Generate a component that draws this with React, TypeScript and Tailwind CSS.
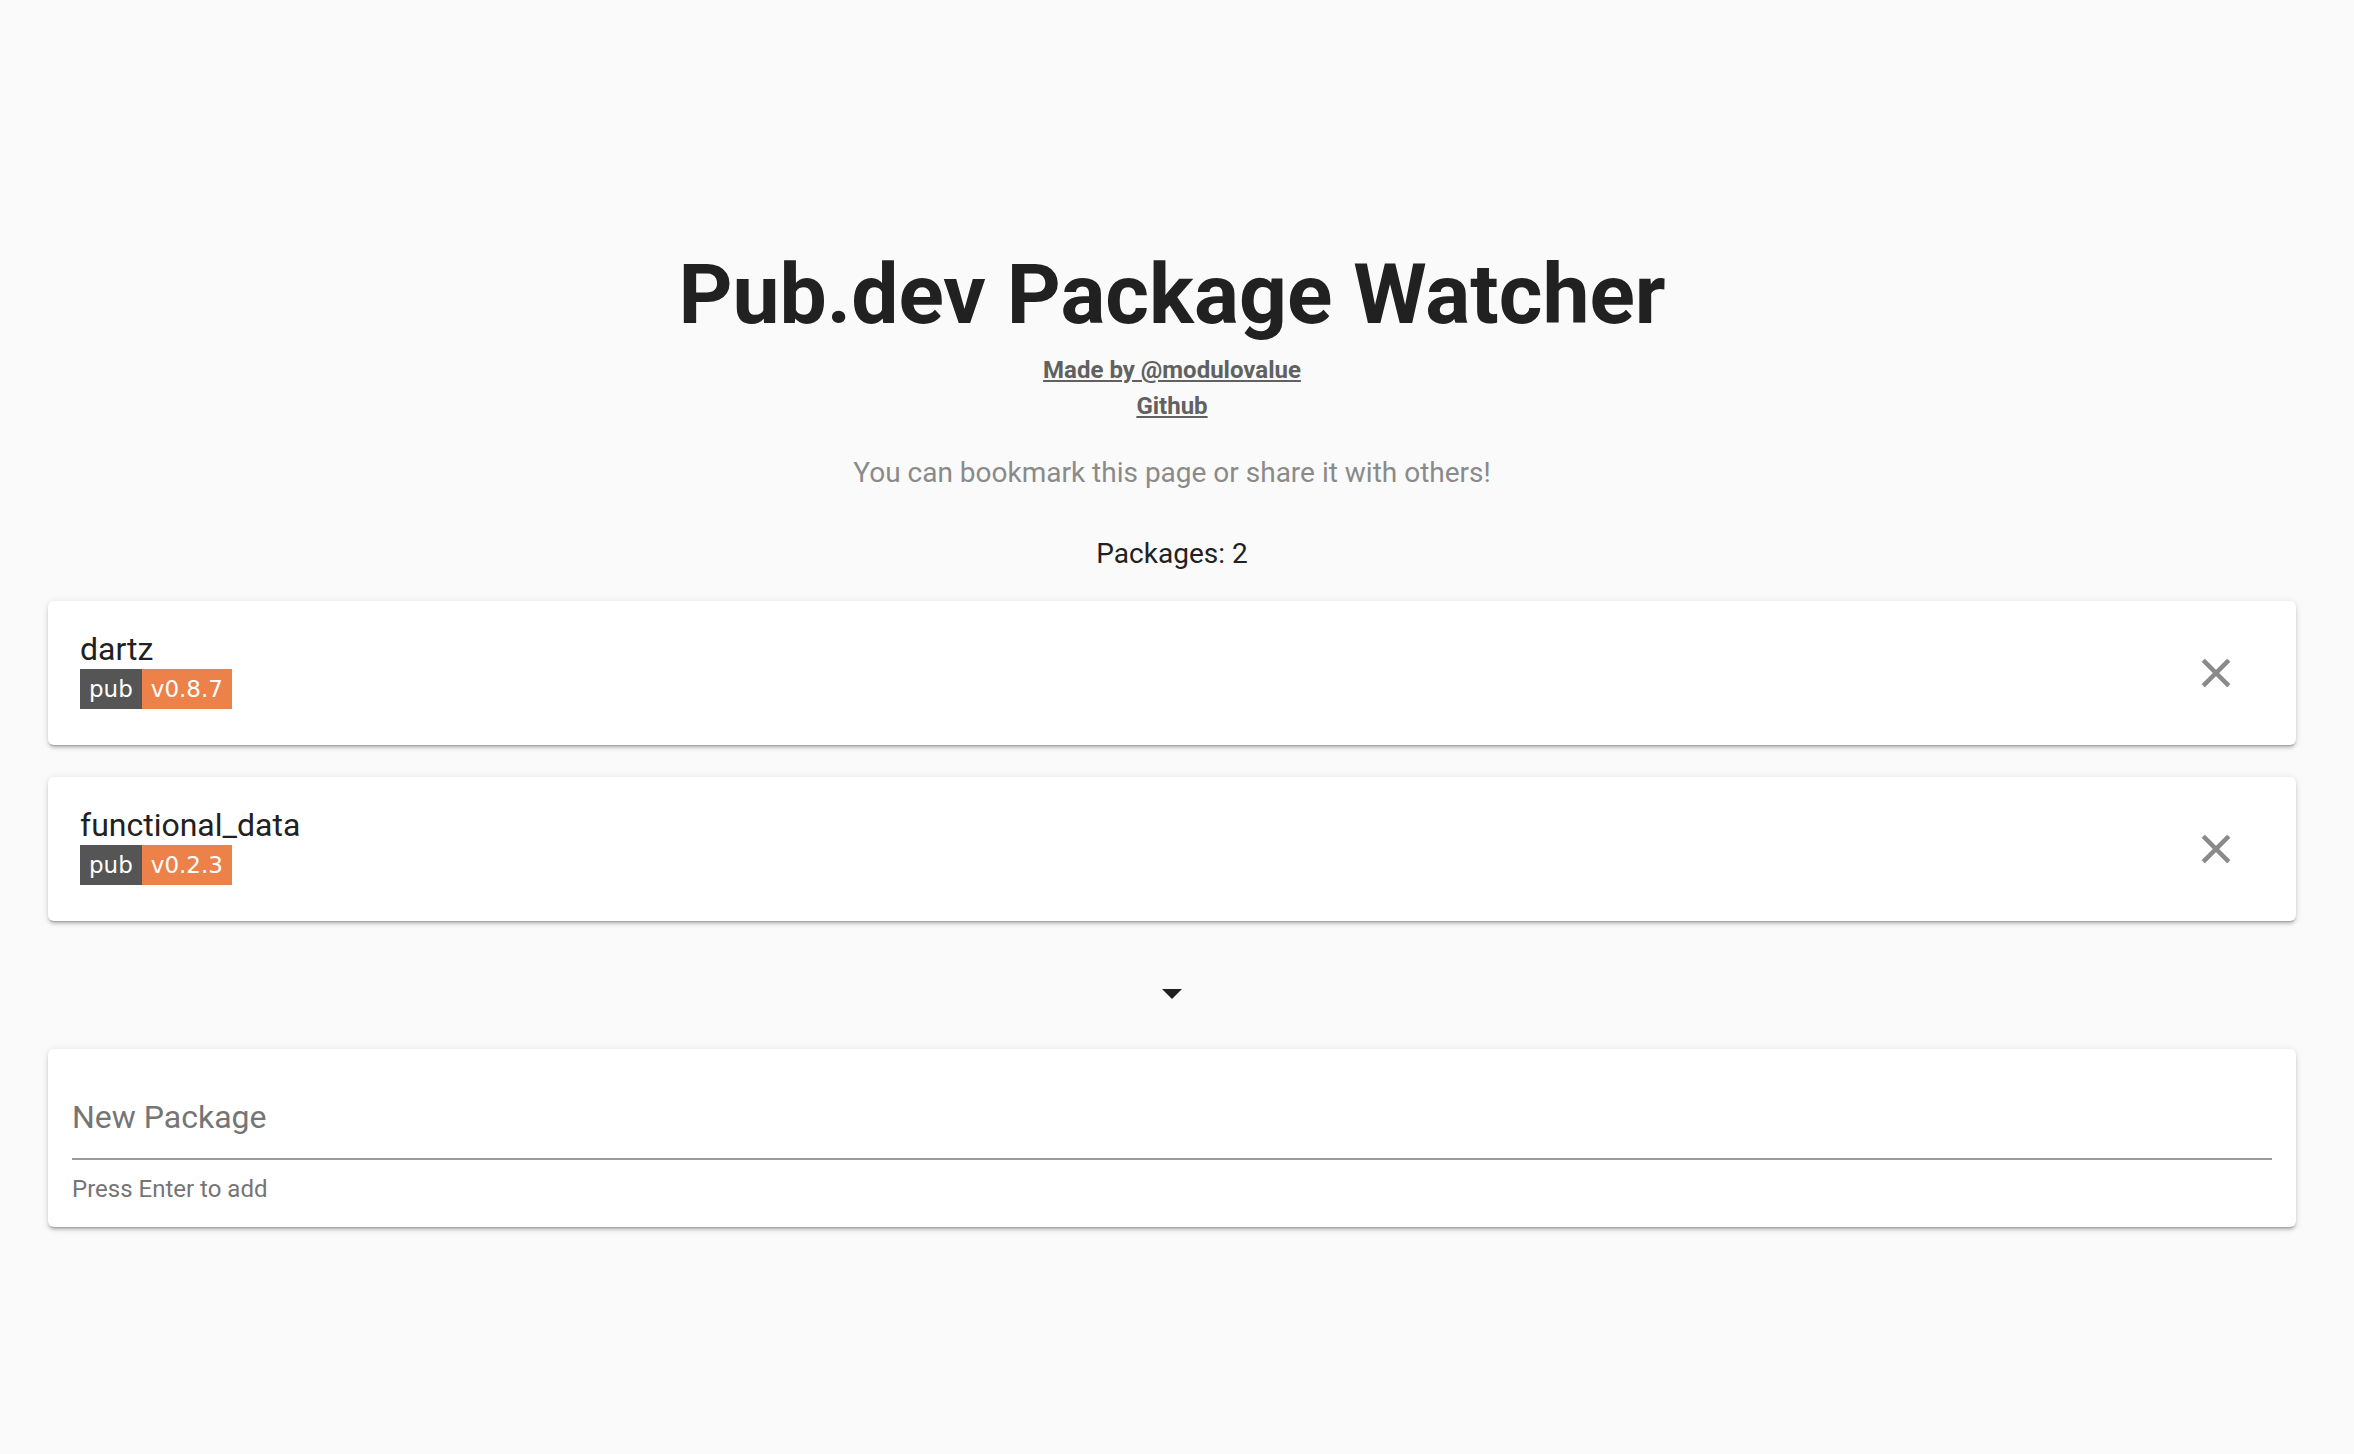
const packages = [
  { name: "dartz", version: "v0.8.7" },
  { name: "functional_data", version: "v0.2.3" },
];

const cardShadow =
  "shadow-[0_3px_1.5px_-2px_rgba(0,0,0,0.2),0_3px_3px_0_rgba(0,0,0,0.14),0_1.5px_7.5px_0_rgba(0,0,0,0.12)]";

function CloseIcon() {
  return (
    <svg viewBox="0 0 24 24" className="h-[48px] w-[48px] fill-[#8a8a8a] stroke-[#8a8a8a] stroke-[0.35]">
      <path d="M19 6.41L17.59 5 12 10.59 6.41 5 5 6.41 10.59 12 5 17.59 6.41 19 12 13.41 17.59 19 19 17.59 13.41 12z" />
    </svg>
  );
}

function PubBadge({ version }: { version: string }) {
  return (
    <div className="flex h-[40px] w-fit font-['DejaVu_Sans',sans-serif] text-[23px] leading-none text-white">
      <span className="flex items-center bg-[#555555] px-[9px]">pub</span>
      <span className="flex items-center bg-[#ec824a] px-[9px]">{version}</span>
    </div>
  );
}

function PackageCard({ name, version }: { name: string; version: string }) {
  return (
    <div className={`flex h-[144px] items-center justify-between rounded-[6px] bg-white pl-[32px] pr-[56px] ${cardShadow}`}>
      <div className="pb-[8px]">
        <div className="text-[32px] leading-[40px] text-[#212121]">{name}</div>
        <PubBadge version={version} />
      </div>
      <CloseIcon />
    </div>
  );
}

export default function App() {
  return (
    <div className="min-h-[1454px] bg-[#fafafa] font-[Roboto,sans-serif]">
      <div className="w-[2344px] px-[48px] pt-[245px]">
        <div className="flex flex-col items-center text-center">
          <h1 className="text-[84px] font-bold leading-[100px] text-[#212121]">Pub.dev Package Watcher</h1>
          <div className="mt-[7px] flex flex-col items-center text-[24px] font-bold leading-[36px] text-[#616161]">
            <a className="underline" href="#">Made by @modulovalue</a>
            <a className="underline" href="#">Github</a>
          </div>
          <p className="mt-[28px] text-[28px] leading-[42px] text-[#8a8a8a]">
            You can bookmark this page or share it with others!
          </p>
          <p className="mt-[39px] text-[28px] leading-[42px] text-[#212121]">Packages: 2</p>
        </div>

        <div className="mt-[26px] flex flex-col gap-[32px]">
          {packages.map((p) => (
            <PackageCard key={p.name} name={p.name} version={p.version} />
          ))}
        </div>

        <div className="mt-[48px] flex justify-center">
          <svg viewBox="0 0 24 24" className="h-[48px] w-[48px] fill-[#212121]">
            <path d="M7 10l5 5 5-5z" />
          </svg>
        </div>

        <div className={`mt-[32px] rounded-[6px] bg-white px-[24px] pt-[46px] pb-[20px] ${cardShadow}`}>
          <input
            className="block h-[44px] w-full bg-transparent text-[32px] leading-[44px] text-[#212121] outline-none placeholder:text-[#757575]"
            placeholder="New Package"
          />
          <div className="mt-[19px] h-[2px] bg-[#9a9a9a]" />
          <div className="mt-[11px] text-[24px] leading-[36px] text-[#757575]">Press Enter to add</div>
        </div>
      </div>
    </div>
  );
}
